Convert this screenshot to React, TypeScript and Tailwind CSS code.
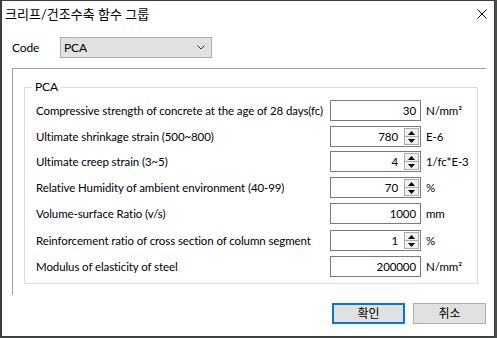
import React from "react";

type Row = {
  label: string;
  value: string;
  unit: string;
  spin: boolean;
  gap: string;
};

const ROWS: Row[] = [
  { label: "Compressive strength of concrete at the age of 28 days(fc)", value: "30", unit: "N/mm²", spin: false, gap: "mt-0" },
  { label: "Ultimate shrinkage strain (500~800)", value: "780", unit: "E-6", spin: true, gap: "mt-[5px]" },
  { label: "Ultimate creep strain (3~5)", value: "4", unit: "1/fc*E-3", spin: true, gap: "mt-[4px]" },
  { label: "Relative Humidity of ambient environment (40-99)", value: "70", unit: "%", spin: true, gap: "mt-[5px]" },
  { label: "Volume-surface Ratio (v/s)", value: "1000", unit: "mm", spin: false, gap: "mt-[5px]" },
  { label: "Reinforcement ratio of cross section of column segment", value: "1", unit: "%", spin: true, gap: "mt-[6px]" },
  { label: "Modulus of elasticity of steel", value: "200000", unit: "N/mm²", spin: false, gap: "mt-[5px]" },
];

function Spinner() {
  return (
    <div className="flex flex-col w-[16px] h-full py-[1px] pr-[1px]">
      <div className="flex-1 flex items-center justify-center border border-[#acacac] bg-[#f0f0f0]">
        <svg width="7" height="4" viewBox="0 0 7 4">
          <path d="M0 4 L3.5 0 L7 4 Z" fill="#000" />
        </svg>
      </div>
      <div className="flex-1 flex items-center justify-center border border-t-0 border-[#acacac] bg-[#f0f0f0]">
        <svg width="7" height="4" viewBox="0 0 7 4">
          <path d="M0 0 L3.5 4 L7 0 Z" fill="#000" />
        </svg>
      </div>
    </div>
  );
}

function ValueBox({ value, spin }: { value: string; spin: boolean }) {
  return (
    <div className="flex w-[91px] h-[21px] border border-[#7a7a7a] bg-white">
      <div className={`flex-1 flex items-center justify-end ${spin ? "pr-[6px]" : "pr-[4px]"}`}>{value}</div>
      {spin && <Spinner />}
    </div>
  );
}

export default function App() {
  return (
    <div
      className="w-[497px] h-[338px] bg-[#46504a] text-[11.5px] tracking-[-0.1px] text-black"
      style={{ fontFamily: 'Lato, "Noto Sans CJK KR", sans-serif' }}
    >
      <div className="w-[495px] h-[337px] bg-white border-t border-b border-r border-l-2 border-[#3c3c3c] flex flex-col">
        {/* title bar */}
        <div className="h-[28px] flex items-center justify-between pl-[3px] pr-[7px]">
          <span className="text-[13px] tracking-normal">크리프/건조수축 함수 그룹</span>
          <svg width="10" height="10" viewBox="0 0 10 10" className="mb-[3px]">
            <path d="M0.5 0.5 L9.5 9.5 M9.5 0.5 L0.5 9.5" stroke="#000" strokeWidth="1" />
          </svg>
        </div>

        <div className="pl-[10px] pr-[8px] flex flex-col">
          {/* code */}
          <div className="mt-[8px] flex items-center h-[21px]">
            <span className="w-[48px] text-[12px]">Code</span>
            <div className="w-[152px] h-[21px] border border-[#adadad] bg-[#e1e1e1] flex items-center justify-between pl-[3px] pr-[6px]">
              <span className="text-[12px]">PCA</span>
              <svg width="8" height="5" viewBox="0 0 8 5">
                <path d="M0.5 0.5 L4 4 L7.5 0.5" stroke="#333" strokeWidth="1" fill="none" />
              </svg>
            </div>
          </div>

          {/* outer frame */}
          <div className="mt-[10px] h-[227px] border-t border-l border-[#a0a0a0] pl-[11px] pr-[8px] pt-[18px]">
            <div className="relative h-[197px] border border-[#dcdcdc] pl-[11px] pt-[12px]">
              <span className="absolute left-[7px] top-[-10px] bg-white px-[3px] leading-[18px] text-[12px]">PCA</span>
              {ROWS.map((r) => (
                <div key={r.label} className={`flex items-center h-[21px] ${r.gap}`}>
                  <span className="w-[294px] whitespace-nowrap">{r.label}</span>
                  <ValueBox value={r.value} spin={r.spin} />
                  <span className="ml-[5px] whitespace-nowrap">{r.unit}</span>
                </div>
              ))}
            </div>
          </div>

          {/* buttons */}
          <div className="mt-[8px] flex justify-end gap-[8px]">
            <button className="w-[73px] h-[21px] border-2 border-[#0078d7] bg-[#e1e1e1] flex items-center justify-center text-[12px]">
              확인
            </button>
            <button className="w-[73px] h-[21px] border border-[#adadad] bg-[#e1e1e1] flex items-center justify-center text-[12px]">
              취소
            </button>
          </div>
        </div>
      </div>
    </div>
  );
}
